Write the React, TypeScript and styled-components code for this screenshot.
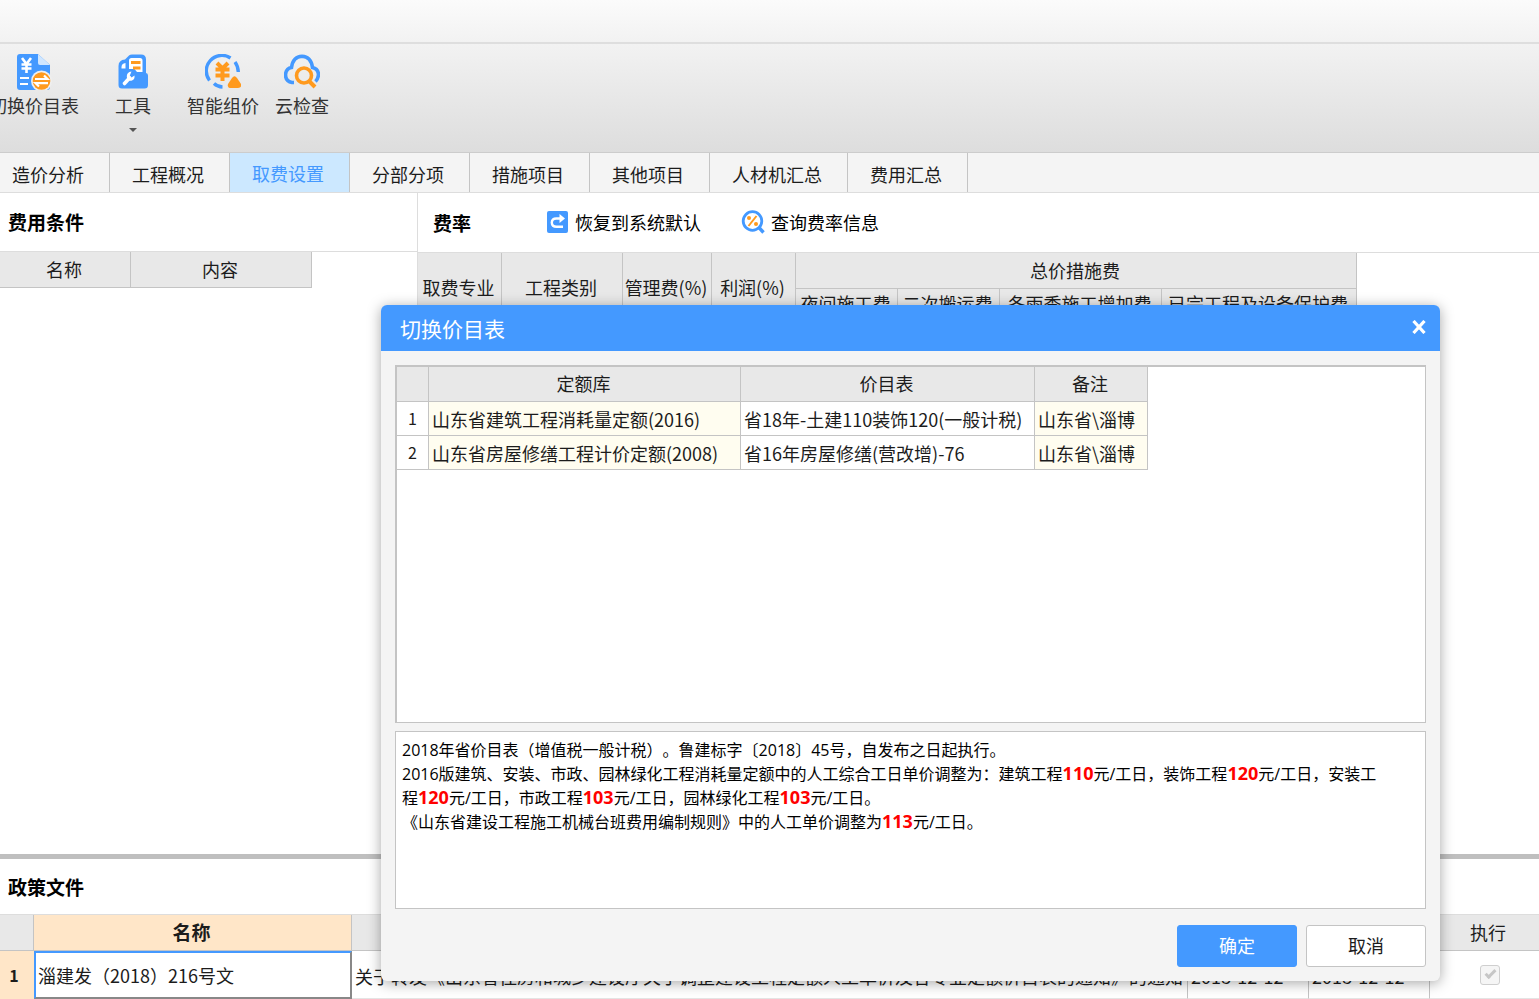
import React from "react";
import styled, { createGlobalStyle, css } from "styled-components";

const blue = "#4499ff";
const orange = "#ff9a1e";
const line = "#c4c4c4";

const GlobalStyle = createGlobalStyle`
  *, *::before, *::after { box-sizing: border-box; }
  body {
    margin: 0;
    background: #fff;
    color: #1c1c1c;
    font: 18px/24px "Noto Sans CJK SC", sans-serif;
    text-spacing-trim: space-all;
  }
  button, input { font: inherit; color: inherit; }
  h2, p { margin: 0; }
`;

const Page = styled.div`
  position: relative;
  display: flex;
  flex-direction: column;
  height: 100vh;
  overflow: hidden;
`;

const TitleBar = styled.header`
  flex: none;
  height: 44px;
  border-bottom: 2px solid #dedede;
  background: linear-gradient(#fbfbfb, #f2f2f2);
`;

const Toolbar = styled.div`
  flex: none;
  display: flex;
  align-items: flex-start;
  gap: 20px;
  height: 109px;
  padding-top: 10px;
  margin-left: -19px;
  border-bottom: 1px solid #cccccc;
  background: linear-gradient(#f2f2f2, #dddddd);
`;

const ToolGroup = styled.div`
  display: flex;
`;

const ToolButton = styled.button`
  display: flex;
  flex-direction: column;
  align-items: center;
  gap: 3px;
  padding: 0 8px;
  border: 0;
  background: none;
  color: #333;
  white-space: nowrap;
`;

const Caret = styled.span`
  margin-top: 8px;
  border: 4px solid transparent;
  border-top-color: #555;
  border-bottom: 0;
`;

const Tabs = styled.nav`
  flex: none;
  display: flex;
  height: 40px;
  border-bottom: 1px solid #dddddd;
  background: #f4f4f4;
`;

const TabList = styled.div`
  display: flex;
  margin-left: -10px;
`;

const Tab = styled.button<{ $active?: boolean }>`
  padding: ${(p) => (p.$active ? 0 : 2)}px 25px 0 22px;
  border: 0;
  border-right: 1px solid ${line};
  background: ${(p) => (p.$active ? "#cce8ff" : "transparent")};
  color: ${(p) => (p.$active ? blue : "#1c1c1c")};
  white-space: nowrap;
`;

const Workspace = styled.main`
  flex: 1;
  display: flex;
  min-height: 0;
`;

const ConditionPanel = styled.section`
  flex: none;
  width: 418px;
  border-right: 1px solid #dddddd;
`;

const RatePanel = styled.section`
  flex: 1;
  min-width: 0;
  overflow: hidden;
`;

const PanelHead = styled.div<{ $indent?: boolean }>`
  display: flex;
  align-items: center;
  height: ${(p) => (p.$indent ? 60 : 59)}px;
  padding-left: ${(p) => (p.$indent ? 15 : 8)}px;
  border-bottom: 1px solid #dddddd;
`;

const PanelTitle = styled.h2`
  font-size: 19px;
  line-height: 24px;
  font-weight: 700;
  color: #000;
`;

const Actions = styled.div`
  display: flex;
  gap: 40px;
  margin-left: 76px;
`;

const Action = styled.button`
  display: flex;
  align-items: center;
  gap: 6px;
  padding: 0 0 2px;
  border: 0;
  background: none;
  color: #000;
  white-space: nowrap;
`;

const Grid = styled.table<{ $width: string }>`
  width: ${(p) => p.$width};
  table-layout: fixed;
  border-collapse: separate;
  border-spacing: 0;
`;

const HeadCell = styled.th<{ $selected?: boolean }>`
  height: 36px;
  padding: 0 2px 2px 0;
  overflow: hidden;
  border-right: 1px solid ${line};
  border-bottom: 1px solid ${line};
  background: ${(p) => (p.$selected ? "#ffe6c8" : "#e8e8e8")};
  font-size: ${(p) => (p.$selected ? 19 : 18)}px;
  font-weight: ${(p) => (p.$selected ? 700 : 400)};
  line-height: 24px;
  text-align: center;
  white-space: nowrap;
`;

const SubHeadCell = styled(HeadCell)`
  height: 34px;
  padding-bottom: 6px;
`;

const DialogHeadCell = styled(HeadCell)`
  height: 35px;
`;

const cellText = css`
  overflow: hidden;
  border-right: 1px solid ${line};
  border-bottom: 1px solid ${line};
  white-space: nowrap;
`;

const DialogCell = styled.td<{ $locked?: boolean }>`
  ${cellText}
  height: 34px;
  padding: 0 0 0 3px;
  background: ${(p) => (p.$locked ? "#fffdf0" : "#fff")};
`;

const DialogIndex = styled.th`
  ${cellText}
  padding: 0 0 2px;
  font-size: 16px;
  font-weight: 400;
  text-align: center;
`;

const PolicyPanel = styled.section`
  flex: none;
  overflow: hidden;
  border-top: 5px solid #bfbfbf;
`;

const PolicyHead = styled(PanelHead)`
  height: 56px;
`;

const PolicyCell = styled.td<{ $selected?: boolean }>`
  ${cellText}
  height: 48px;
  padding: 2px 0 0 3px;
  border-bottom-color: #e4e4e4;
  ${(p) =>
    p.$selected &&
    css`
      padding: 0 0 0 2px;
      border: 2px solid ${blue};
      border-right-color: #888;
      border-bottom-color: #888;
    `}
`;

const PolicyIndex = styled.th`
  padding: 0 6px 0 0;
  background: #ffe6c8;
  font-size: 16px;
  font-weight: 700;
`;

const CheckCell = styled(PolicyCell)`
  padding: 0 0 4px;
  border-right: 0;
  text-align: center;
`;

const Check = styled.input`
  position: relative;
  width: 20px;
  height: 20px;
  margin: 0;
  border: 1px solid #cfcfcf;
  border-radius: 3px;
  background: #f5f5f5;
  appearance: none;
  vertical-align: middle;
  &:checked::after {
    content: "";
    position: absolute;
    top: 4px;
    left: 4px;
    width: 11px;
    height: 6px;
    border: solid #c6c6c6;
    border-width: 0 0 3px 3px;
    transform: rotate(-45deg);
  }
`;

const Dialog = styled.div`
  position: absolute;
  top: 305px;
  left: 381px;
  right: 99px;
  border-radius: 6px;
  background: #f4f4f4;
  box-shadow: 0 2px 14px rgba(0, 0, 0, 0.35);
  overflow: hidden;
`;

const DialogTitle = styled.div`
  display: flex;
  align-items: center;
  justify-content: space-between;
  height: 46px;
  padding: 0 13px 0 19px;
  background: ${blue};
  color: #fff;
`;

const DialogName = styled.h2`
  font-size: 21px;
  line-height: 28px;
  font-weight: 400;
`;

const CloseButton = styled.button`
  display: flex;
  padding: 0 0 2px;
  border: 0;
  background: none;
  color: #fff;
`;

const DialogBody = styled.div`
  display: flex;
  flex-direction: column;
  gap: 8px;
  padding: 14px;
`;

const ListBox = styled.div`
  height: 358px;
  border: 1px solid ${line};
  border-top-width: 2px;
  border-left-width: 2px;
  background: #fff;
  overflow: hidden;
`;

const Note = styled.div`
  height: 178px;
  padding: 6px;
  border: 1px solid ${line};
  background: #fff;
  color: #000;
  font: 16px/24px "Open Sans", "Noto Sans CJK SC", sans-serif;
  white-space: nowrap;
  overflow: hidden;
`;

const Price = styled.strong`
  color: #ff0000;
  font-size: 18px;
  font-weight: 700;
  line-height: 20px;
`;

const Footer = styled.div`
  display: flex;
  justify-content: flex-end;
  gap: 9px;
  padding-top: 8px;
`;

const DialogButton = styled.button<{ $primary?: boolean }>`
  width: 120px;
  height: 42px;
  padding: 0 0 2px;
  border: 1px solid ${(p) => (p.$primary ? blue : line)};
  border-radius: 3px;
  background: ${(p) => (p.$primary ? blue : "#fff")};
  color: ${(p) => (p.$primary ? "#fff" : "#1c1c1c")};
`;

const PriceListIcon = () => (
  <svg width="36" height="36" viewBox="0 0 36 36" fill="none">
    <path d="M4 0H22L34 11V33Q34 36 31 36H4Q1 36 1 33V3Q1 0 4 0Z" fill={blue} />
    <path d="M22 0L34 11H24Q22 11 22 9Z" fill="#cfe6ff" />
    <path d="M6 4L10.500 10L15 4M10.500 10V19M5.500 10.500H15.500M5.500 14.500H15.500" stroke="#fff" strokeWidth="2.600" />
    <path d="M4 24H13M4 30H12" stroke="#fff" strokeWidth="2.200" />
    <circle cx="25.500" cy="27" r="10.500" fill="#efefef" />
    <circle cx="25.500" cy="27" r="8.800" fill={orange} />
    <path d="M19 25H31.500L28 21.500M32 29.200H19.500L23 32.500" stroke="#fff" strokeWidth="2.200" />
  </svg>
);

const ToolsIcon = () => (
  <svg width="36" height="36" viewBox="0 0 36 36" fill="none">
    <path d="M3.500 12Q3.500 6 10 5.500L14 1.500Q15 .5 17 .5H26Q31 .5 31 5.500V19Q33 19 33 21.500V31Q33 34.500 29.500 34.500H7Q3.500 34.500 3.500 31Z" fill={blue} />
    <path d="M14 9V6.500Q14 4 16.500 4H25Q27.500 4 27.500 6.500V18H22L19.500 15H14Z" fill="#fff" />
    <path d="M10.500 9V14.500H6.500V13Q6.500 9.500 10.500 9Z" fill="#fff" />
    <path d="M16 8.500H25.500M18 14H25.500" stroke={orange} strokeWidth="2.800" />
    <path d="M9.500 29.500L14.500 24" stroke="#fff" strokeWidth="3.600" strokeLinecap="round" />
    <path d="M16.500 17.500Q11.500 18 11.800 23Q12.500 27.500 17 26.500Q20 25.500 19.500 21.500L16.500 23.500L14.800 21.500Z" fill="#fff" />
  </svg>
);

const SmartPriceIcon = () => (
  <svg width="36" height="36" viewBox="0 0 36 36" fill="none">
    <g stroke={blue} strokeWidth="3.400">
      <path d="M4.500 26.500A15.600 15.600 0 0 1 25.500 4" />
      <path d="M30 8Q33 12 33.300 18" />
      <path d="M9 29.500Q12.500 32.800 17.500 33" />
    </g>
    <path d="M12 9L17.500 14.500L23 9M17.500 14V27M10.500 15.500H24.500M10.500 21.500H24.500" stroke={orange} strokeWidth="4" />
    <path d="M27 24Q29.500 20.500 32 24L36 30Q37 34 33 34H26Q22 34 23 30Z" fill={orange} />
  </svg>
);

const CloudCheckIcon = () => (
  <svg width="36" height="36" viewBox="0 0 36 36" fill="none">
    <path d="M10 28.500H8Q1.500 27.500 1.500 20.500Q2 14.500 7.500 13.500Q9 2.500 18 2.200Q27 2.500 28.500 13.500Q34.500 15 34.500 21Q34 25 31.500 27.500" stroke={blue} strokeWidth="3.600" />
    <circle cx="20" cy="21.500" r="7.500" stroke={orange} strokeWidth="3.600" />
    <path d="M25 27L31 33" stroke={orange} strokeWidth="4" />
  </svg>
);

const RestoreIcon = () => (
  <svg width="22" height="22" viewBox="0 0 22 22" fill="none">
    <rect x="0" y="0" width="21" height="22" rx="2" fill={blue} />
    <path d="M16 15.800H9.500Q4.800 15.800 4.800 11.600T9.500 7.500H14" stroke="#fff" strokeWidth="2.400" />
    <path d="M12.500 3L18 7.500L12.500 12Z" fill="#fff" />
  </svg>
);

const RateSearchIcon = () => (
  <svg width="24" height="24" viewBox="0 0 24 24" fill="none">
    <circle cx="11.500" cy="11" r="9.300" stroke={blue} strokeWidth="2.800" />
    <path d="M17.500 17L22.500 22.500" stroke={blue} strokeWidth="3.400" />
    <path d="M15.500 6L7.500 16" stroke={orange} strokeWidth="2" />
    <circle cx="8" cy="8" r="2" fill={orange} />
    <circle cx="15" cy="14" r="2" fill={orange} />
  </svg>
);

const CloseIcon = () => (
  <svg width="16" height="14" viewBox="0 0 16 14" fill="none">
    <path d="M2.500 1L13.500 13M13.500 1L2.500 13" stroke="#fff" strokeWidth="3.200" />
  </svg>
);

const tabs = ["造价分析", "工程概况", "取费设置", "分部分项", "措施项目", "其他项目", "人材机汇总", "费用汇总"];
const rateColumns = ["取费专业", "工程类别", "管理费(%)", "利润(%)"];
const measureColumns = ["夜间施工费", "二次搬运费", "冬雨季施工增加费", "已完工程及设备保护费"];
const priceLists = [
  ["山东省建筑工程消耗量定额(2016)", "省18年-土建110装饰120(一般计税)", "山东省\\淄博"],
  ["山东省房屋修缮工程计价定额(2008)", "省16年房屋修缮(营改增)-76", "山东省\\淄博"],
];

const Columns = ({ widths }: { widths: (number | undefined)[] }) => (
  <colgroup>
    {widths.map((width, i) => (
      <col key={i} width={width} />
    ))}
  </colgroup>
);

export default function App() {
  return (
    <Page>
      <GlobalStyle />
      <TitleBar />
      <Toolbar>
        <ToolGroup>
          <ToolButton><PriceListIcon />切换价目表</ToolButton>
        </ToolGroup>
        <ToolGroup>
          <ToolButton><ToolsIcon />工具<Caret /></ToolButton>
        </ToolGroup>
        <ToolGroup>
          <ToolButton><SmartPriceIcon />智能组价</ToolButton>
          <ToolButton><CloudCheckIcon />云检查</ToolButton>
        </ToolGroup>
      </Toolbar>
      <Tabs>
        <TabList>
          {tabs.map((name) => (
            <Tab key={name} $active={name === "取费设置"}>{name}</Tab>
          ))}
        </TabList>
      </Tabs>

      <Workspace>
        <ConditionPanel>
          <PanelHead><PanelTitle>费用条件</PanelTitle></PanelHead>
          <Grid $width="312px">
            <Columns widths={[131, 181]} />
            <thead>
              <tr>
                <HeadCell>名称</HeadCell>
                <HeadCell>内容</HeadCell>
              </tr>
            </thead>
          </Grid>
        </ConditionPanel>
        <RatePanel>
          <PanelHead $indent>
            <PanelTitle>费率</PanelTitle>
            <Actions>
              <Action><RestoreIcon />恢复到系统默认</Action>
              <Action><RateSearchIcon />查询费率信息</Action>
            </Actions>
          </PanelHead>
          <Grid $width="939px">
            <Columns widths={[84, 121, 89, 84, 102, 102, 162, 195]} />
            <thead>
              <tr>
                {rateColumns.map((name) => (
                  <HeadCell key={name} rowSpan={2}>{name}</HeadCell>
                ))}
                <HeadCell colSpan={4}>总价措施费</HeadCell>
              </tr>
              <tr>
                {measureColumns.map((name) => (
                  <SubHeadCell key={name}>{name}</SubHeadCell>
                ))}
              </tr>
            </thead>
          </Grid>
        </RatePanel>
      </Workspace>

      <PolicyPanel>
        <PolicyHead><PanelTitle>政策文件</PanelTitle></PolicyHead>
        <Grid $width="calc(100% + 10px)">
          <Columns widths={[34, 318, undefined, 121, 121, 119]} />
          <thead>
            <tr>
              <HeadCell />
              <HeadCell $selected>名称</HeadCell>
              <HeadCell colSpan={3} />
              <HeadCell>执行</HeadCell>
            </tr>
          </thead>
          <tbody>
            <tr>
              <PolicyIndex>1</PolicyIndex>
              <PolicyCell $selected>淄建发（2018）216号文</PolicyCell>
              <PolicyCell>关于转发《山东省住房和城乡建设厅关于调整建设工程定额人工单价及各专业定额价目表的通知》的通知</PolicyCell>
              <PolicyCell>2018-12-12</PolicyCell>
              <PolicyCell>2018-12-12</PolicyCell>
              <CheckCell><Check type="checkbox" aria-label="执行" defaultChecked disabled /></CheckCell>
            </tr>
          </tbody>
        </Grid>
      </PolicyPanel>

      <Dialog role="dialog" aria-labelledby="dialog-name">
        <DialogTitle>
          <DialogName id="dialog-name">切换价目表</DialogName>
          <CloseButton aria-label="关闭"><CloseIcon /></CloseButton>
        </DialogTitle>
        <DialogBody>
          <ListBox>
            <Grid $width="751px">
              <Columns widths={[32, 312, 294, 113]} />
              <thead>
                <tr>
                  <DialogHeadCell />
                  <DialogHeadCell>定额库</DialogHeadCell>
                  <DialogHeadCell>价目表</DialogHeadCell>
                  <DialogHeadCell>备注</DialogHeadCell>
                </tr>
              </thead>
              <tbody>
                {priceLists.map(([library, list, remark], i) => (
                  <tr key={library}>
                    <DialogIndex>{i + 1}</DialogIndex>
                    <DialogCell $locked>{library}</DialogCell>
                    <DialogCell>{list}</DialogCell>
                    <DialogCell $locked>{remark}</DialogCell>
                  </tr>
                ))}
              </tbody>
            </Grid>
          </ListBox>
          <Note>
            <p>2018年省价目表（增值税一般计税）。鲁建标字〔2018〕45号，自发布之日起执行。</p>
            <p>
              2016版建筑、安装、市政、园林绿化工程消耗量定额中的人工综合工日单价调整为：建筑工程<Price>110</Price>元/工日，装饰工程<Price>120</Price>元/工日，安装工<br />
              程<Price>120</Price>元/工日，市政工程<Price>103</Price>元/工日，园林绿化工程<Price>103</Price>元/工日。
            </p>
            <p>《山东省建设工程施工机械台班费用编制规则》中的人工单价调整为<Price>113</Price>元/工日。</p>
          </Note>
          <Footer>
            <DialogButton $primary>确定</DialogButton>
            <DialogButton>取消</DialogButton>
          </Footer>
        </DialogBody>
      </Dialog>
    </Page>
  );
}
